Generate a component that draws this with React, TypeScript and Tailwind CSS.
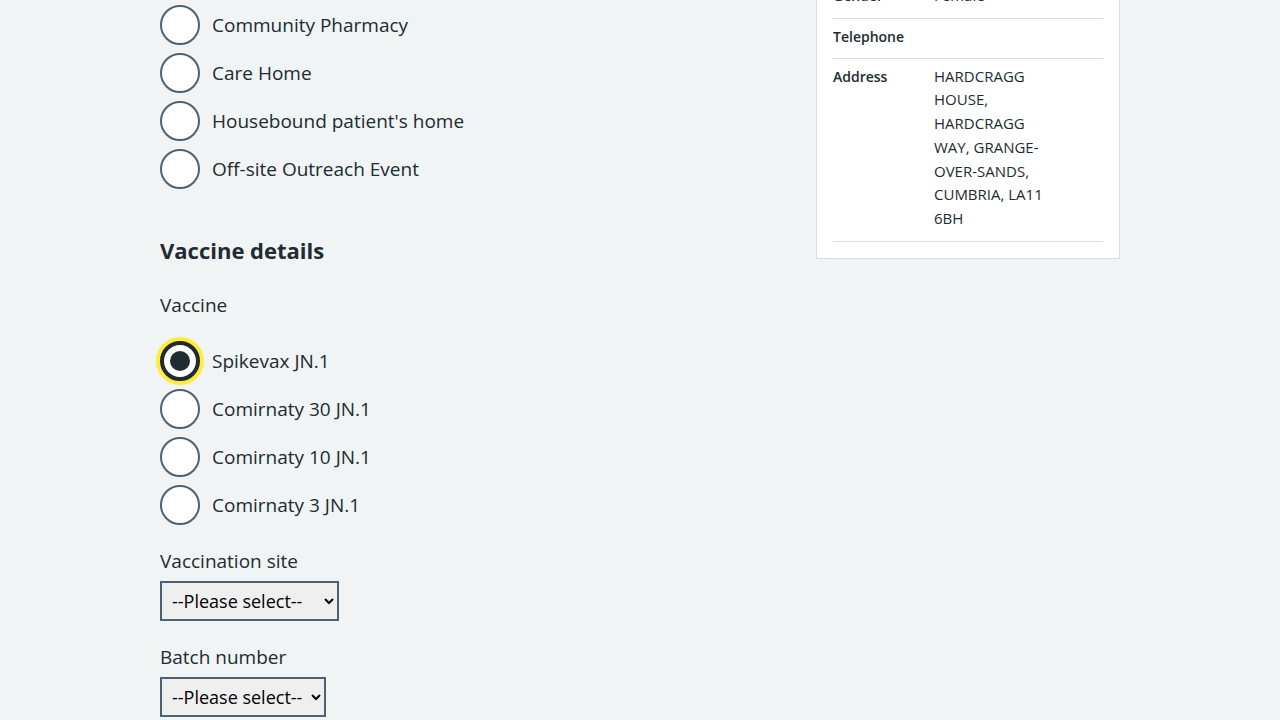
import React from "react";

const siteOptions = [
  "Community Pharmacy",
  "Care Home",
  "Housebound patient's home",
  "Off-site Outreach Event",
];

const vaccines = [
  "Spikevax JN.1",
  "Comirnaty 30 JN.1",
  "Comirnaty 10 JN.1",
  "Comirnaty 3 JN.1",
];

const patientRows: { label: string; value: React.ReactNode }[] = [
  { label: "Gender", value: "Female" },
  { label: "Telephone", value: "" },
  {
    label: "Address",
    value: (
      <>
        HARDCRAGG
        <br />
        HOUSE,
        <br />
        HARDCRAGG
        <br />
        WAY, GRANGE-
        <br />
        OVER-SANDS,
        <br />
        CUMBRIA, LA11
        <br />
        6BH
      </>
    ),
  },
];

function Radio({ label, checked }: { label: string; checked?: boolean }) {
  return (
    <label className="flex items-center gap-3 h-10">
      <span
        className={
          checked
            ? "relative flex h-10 w-10 shrink-0 items-center justify-center rounded-full border-4 border-[#212b32] bg-white shadow-[0_0_0_4px_#ffeb3b]"
            : "relative flex h-10 w-10 shrink-0 items-center justify-center rounded-full border-2 border-[#4c6272] bg-white"
        }
      >
        {checked && <span className="h-5 w-5 rounded-full bg-[#212b32]" />}
      </span>
      <span className="text-[19px] leading-7">{label}</span>
    </label>
  );
}

export default function App() {
  return (
    <div
      className="h-[720px] overflow-hidden bg-[#f0f4f5] text-[#212b32]"
      style={{ fontFamily: '"Open Sans", sans-serif' }}
    >
      <div className="mx-auto flex w-[960px] justify-between">
        <div className="w-[600px] pt-[5px]">
          <div className="flex flex-col gap-2">
            {siteOptions.map((o) => (
              <Radio key={o} label={o} />
            ))}
          </div>

          <h2 className="mt-[46px] text-[22px] font-bold leading-[30px]">
            Vaccine details
          </h2>

          <p className="mt-[26px] text-[19px] leading-7">Vaccine</p>
          <div className="mt-[22px] flex flex-col gap-2">
            {vaccines.map((v, i) => (
              <Radio key={v} label={v} checked={i === 0} />
            ))}
          </div>

          <p className="mt-[22px] text-[19px] leading-7">Vaccination site</p>
          <select className="mt-[6px] h-10 w-[179px] border-2 border-[#4c6272] bg-[#efefef] pl-[6px] text-[18px] text-black">
            <option>--Please select--</option>
          </select>

          <p className="mt-[22px] text-[19px] leading-7">Batch number</p>
          <select className="mt-[6px] h-10 w-[166px] border-2 border-[#4c6272] bg-[#efefef] pl-[6px] text-[18px] text-black">
            <option>--Please select--</option>
          </select>
        </div>

        <div className="w-[304px]">
          <div className="-mt-[39px] border border-[#d8dde0] bg-white px-4 pb-4 pt-4">
            <dl>
              {patientRows.map((r) => (
                <div
                  key={r.label}
                  className="flex border-b border-[#d8dde0] pb-[10px] pt-[6px]"
                >
                  <dt className="w-[101px] shrink-0 text-[14px] font-semibold leading-[23px]">
                    {r.label}
                  </dt>
                  <dd className="text-[15px] leading-[23.7px]">{r.value}</dd>
                </div>
              ))}
            </dl>
          </div>
        </div>
      </div>
    </div>
  );
}
